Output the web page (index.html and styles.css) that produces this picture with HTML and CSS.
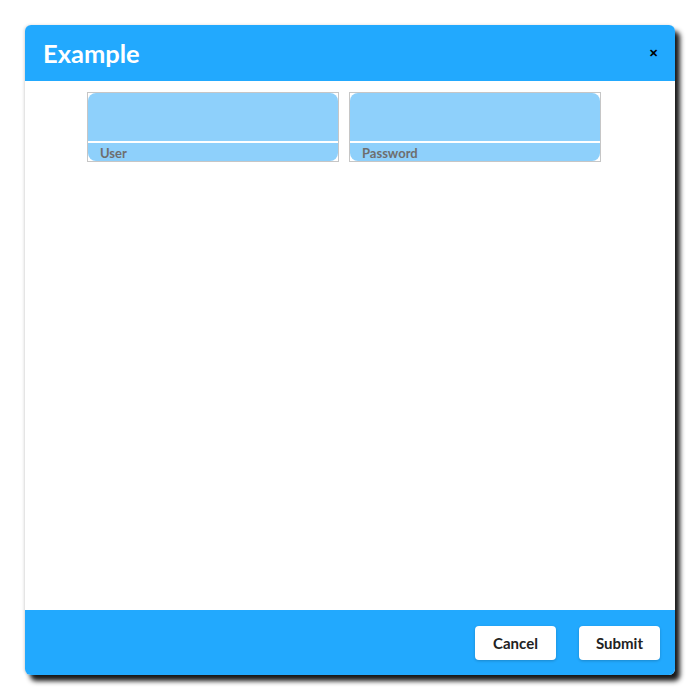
FILE: index.html
```html
<!DOCTYPE html>
<html lang="en">
<head>
    <meta charset="UTF-8">
    <meta name="viewport" content="width=device-width, initial-scale=1.0">
    <title>Example</title>
    <link rel="stylesheet" href="styles.css">
</head>
<body>
    <div class="dialog">
        <div class="dialog-header">
            <h1>Example</h1>
            <button type="button" class="close-button">&#x2715;</button>
        </div>
        <div class="dialog-body">
            <div class="field">
                <div class="field-inner">
                    <div class="field-input"></div>
                    <div class="field-label">User</div>
                </div>
            </div>
            <div class="field">
                <div class="field-inner">
                    <div class="field-input"></div>
                    <div class="field-label">Password</div>
                </div>
            </div>
        </div>
        <div class="dialog-footer">
            <button type="button" class="btn">Cancel</button>
            <button type="button" class="btn">Submit</button>
        </div>
    </div>
</body>
</html>
```

FILE: styles.css
```css
body {
    margin: 0;
    background: #ffffff;
    font-family: Lato, "Noto Sans", sans-serif;
}
.dialog {
    width: 650px;
    height: 650px;
    margin: 25px;
    display: flex;
    flex-direction: column;
    background: #ffffff;
    border-radius: 6px;
    box-shadow: 5px 6px 5px rgba(0, 0, 0, 0.9), -1px 0 3px rgba(0, 0, 0, 0.15);
    overflow: hidden;
}
.dialog-header {
    height: 56px;
    background: #22a9fe;
    display: flex;
    align-items: center;
    justify-content: space-between;
    padding: 0 17px 0 18px;
}
.dialog-header h1 {
    margin: 0;
    color: #ffffff;
    font-size: 25.5px;
    font-weight: 700;
}
.close-button {
    background: none;
    border: none;
    padding: 0;
    font-size: 11px;
    font-weight: 700;
    color: #000000;
    cursor: pointer;
}
.dialog-body {
    flex: 1;
    display: flex;
    align-items: flex-start;
    gap: 10px;
    padding: 11px 0 0 62px;
}
.field {
    width: 250px;
    height: 68px;
    border: 1px solid #c6c6c6;
}
.field-inner {
    height: 100%;
    display: flex;
    flex-direction: column;
    border-radius: 8px;
    overflow: hidden;
}
.field-input {
    height: 48px;
    background: #8ed0fb;
    border-bottom: 2px solid #ffffff;
}
.field-label {
    flex: 1;
    background: #8ed0fb;
    color: #6e6e6e;
    font-size: 13px;
    font-weight: 700;
    padding: 2px 0 0 12px;
}
.dialog-footer {
    height: 65px;
    background: #22a9fe;
    display: flex;
    align-items: center;
    justify-content: flex-end;
    gap: 23px;
    padding: 0 15px;
}
.btn {
    width: 81px;
    height: 34px;
    background: #ffffff;
    color: #222222;
    border: none;
    border-radius: 4px;
    font-family: Lato, "Noto Sans", sans-serif;
    font-size: 15px;
    font-weight: 700;
    box-shadow: 0 1px 3px rgba(0, 0, 0, 0.2);
    cursor: pointer;
}
```
